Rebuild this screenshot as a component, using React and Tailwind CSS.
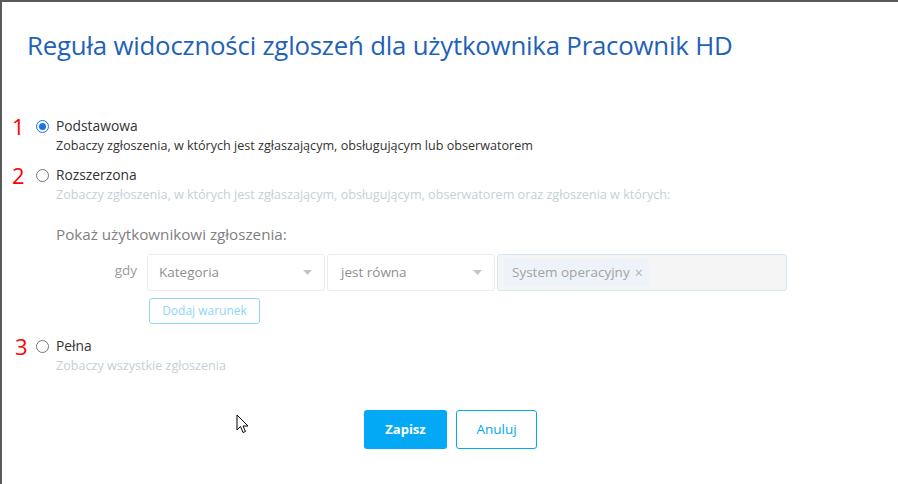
import React from 'react';

const Radio = ({ checked }) => (
  <span
    className={
      checked
        ? 'flex h-[13px] w-[13px] shrink-0 items-center justify-center rounded-full border border-[#1a73e8] bg-white'
        : 'flex h-[13px] w-[13px] shrink-0 items-center justify-center rounded-full border border-[#767676] bg-white'
    }
  >
    {checked && <span className="h-[7px] w-[7px] rounded-full bg-[#1a73e8]" />}
  </span>
);

const Caret = () => (
  <svg width="9" height="5" viewBox="0 0 9 5" className="shrink-0">
    <path d="M0 0h9L4.5 5z" fill="#c4c4c4" />
  </svg>
);

const Option = ({ num, numClass, checked, label, desc, descClass }) => (
  <div>
    <div className="flex h-[20px] items-center pl-[10px]">
      <span className={'w-[24px] text-[22px] leading-none text-[#f00] ' + numClass}>{num}</span>
      <Radio checked={checked} />
      <span className="ml-[7px] text-[13.8px] text-[#333]">{label}</span>
    </div>
    <div className={'h-[19px] pl-[54px] text-[12.6px] leading-[19px] ' + descClass}>{desc}</div>
  </div>
);

export default function App() {
  return (
    <div
      className="relative h-[484px] w-[898px] overflow-hidden border-l-2 border-t-2 border-[#5a5a5a] bg-white"
      style={{ fontFamily: '"Open Sans", "Noto Sans", sans-serif' }}
    >
      <h1 className="mt-[26px] h-[34px] pl-[25px] text-[25.8px] leading-[34px] tracking-[-0.2px] text-[#1f62b8]">
        Reguła widoczności zgloszeń dla użytkownika Pracownik HD
      </h1>

      <div className="mt-[54px]">
        <Option
          num="1"
          numClass="pl-[0px]"
          checked
          label="Podstawowa"
          desc="Zobaczy zgłoszenia, w których jest zgłaszającym, obsługującym lub obserwatorem"
          descClass="text-[#333]"
        />
      </div>

      <div className="mt-[10px]">
        <Option
          num="2"
          numClass=""
          label="Rozszerzona"
          desc="Zobaczy zgłoszenia, w których jest zgłaszającym, obsługującym, obserwatorem oraz zgłoszenia w których:"
          descClass="text-[#c5d0d8]"
        />
      </div>

      <div className="mt-[20px] h-[20px] pl-[54px] text-[15.2px] leading-[20px] text-[#808080]">
        Pokaż użytkownikowi zgłoszenia:
      </div>

      <div className="mt-[10px] flex h-[37px] items-stretch">
        <span className="w-[145px] pr-[10px] text-right text-[13.5px] leading-[33px] text-[#9a9a9a]">gdy</span>
        <div className="flex w-[178px] items-center justify-between rounded-[3px] border border-[#ececec] pl-[11px] pr-[12px] text-[13.5px] text-[#8f8f8f]">
          Kategoria
          <Caret />
        </div>
        <div className="ml-[2px] flex w-[168px] items-center justify-between rounded-[3px] border border-[#ececec] pl-[13px] pr-[12px] text-[13.5px] text-[#8f8f8f]">
          jest równa
          <Caret />
        </div>
        <div className="ml-[2px] flex w-[290px] items-center rounded-[3px] border border-[#d8e6f0] bg-[#f5f5f5] pl-[6px]">
          <span className="flex h-[27px] items-center gap-[5px] rounded-[2px] bg-[#edf3f9] pl-[8px] pr-[6px] text-[13.5px] text-[#a3a3a3]">
            System operacyjny
            <span className="text-[14px] leading-none text-[#b5b5b5]">×</span>
          </span>
        </div>
      </div>

      <div className="mt-[6px] pl-[147px]">
        <button className="h-[26px] w-[111px] rounded-[3px] border border-[#8dd6f7] bg-white text-[12px] text-[#8dd6f7]">
          Dodaj warunek
        </button>
      </div>

      <div className="mt-[12px]">
        <Option
          num="3"
          numClass="pl-[3px]"
          label="Pełna"
          desc="Zobaczy wszystkie zgłoszenia"
          descClass="text-[#c5d0d8]"
        />
      </div>

      <div className="mt-[35px] flex gap-[9px] pl-[362px]">
        <button className="h-[39px] w-[83px] rounded-[3px] bg-[#03a9f4] text-[13px] font-bold text-white">
          Zapisz
        </button>
        <button className="h-[39px] w-[81px] rounded-[3px] border border-[#03a9f4] bg-white text-[13.5px] text-[#03a9f4]">
          Anuluj
        </button>
      </div>

      <svg
        className="absolute left-[234px] top-[412px]"
        width="14"
        height="20"
        viewBox="0 0 14 20"
      >
        <path
          d="M1 1v15l3.5-3.5 2.5 6 2.5-1-2.5-5.5H12z"
          fill="#fff"
          stroke="#000"
          strokeWidth="1"
          strokeLinejoin="round"
        />
      </svg>
    </div>
  );
}
